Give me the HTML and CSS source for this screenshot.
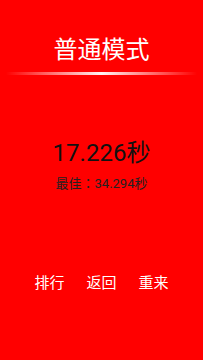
FILE: index.html
```html
<!DOCTYPE html>
<html lang="zh">
<head>
	<meta charset="UTF-8">
	<title>普通模式</title>
	<link rel="stylesheet" href="styles.css">
</head>
<body>
	<div class="result">
		<h1 class="title">普通模式</h1>
		<div class="line"></div>
		<p class="time">17.226秒</p>
		<p class="best" lang="zh-TW">最佳：34.294秒</p>
		<ul class="btns">
			<li><a href="#">排行</a></li>
			<li><a href="#">返回</a></li>
			<li><a href="#">重来</a></li>
		</ul>
	</div>
</body>
</html>
```
FILE: styles.css
```css
*{ margin:0; padding:0; }
li{ list-style:none; }
a{ text-decoration:none; }
html,body{ height:100%; }
body{ background:#ff0000; font-family:Roboto, "Noto Sans CJK SC", sans-serif; }

.result{ display:flex; flex-direction:column; align-items:center; }
.result .title{ margin-top:34px; height:32px; line-height:32px; font-size:24px; font-weight:normal; color:#fff; }
.result .line{ width:100%; height:3px; margin-top:6px; background:linear-gradient(to right, rgba(255,255,255,0) 3%, rgba(255,255,255,0.95) 50%, rgba(255,255,255,0) 97%); }
.result .time{ margin-top:63px; height:30px; line-height:30px; font-size:24px; color:#111; }
.result .best{ margin-top:7px; height:18px; line-height:18px; font-size:13px; color:#222; font-family:Roboto, "Noto Sans CJK TC", sans-serif; }
.result .btns{ display:flex; gap:22px; margin-top:80px; }
.result .btns a{ display:block; font-size:15px; line-height:20px; color:#fff; }
```
